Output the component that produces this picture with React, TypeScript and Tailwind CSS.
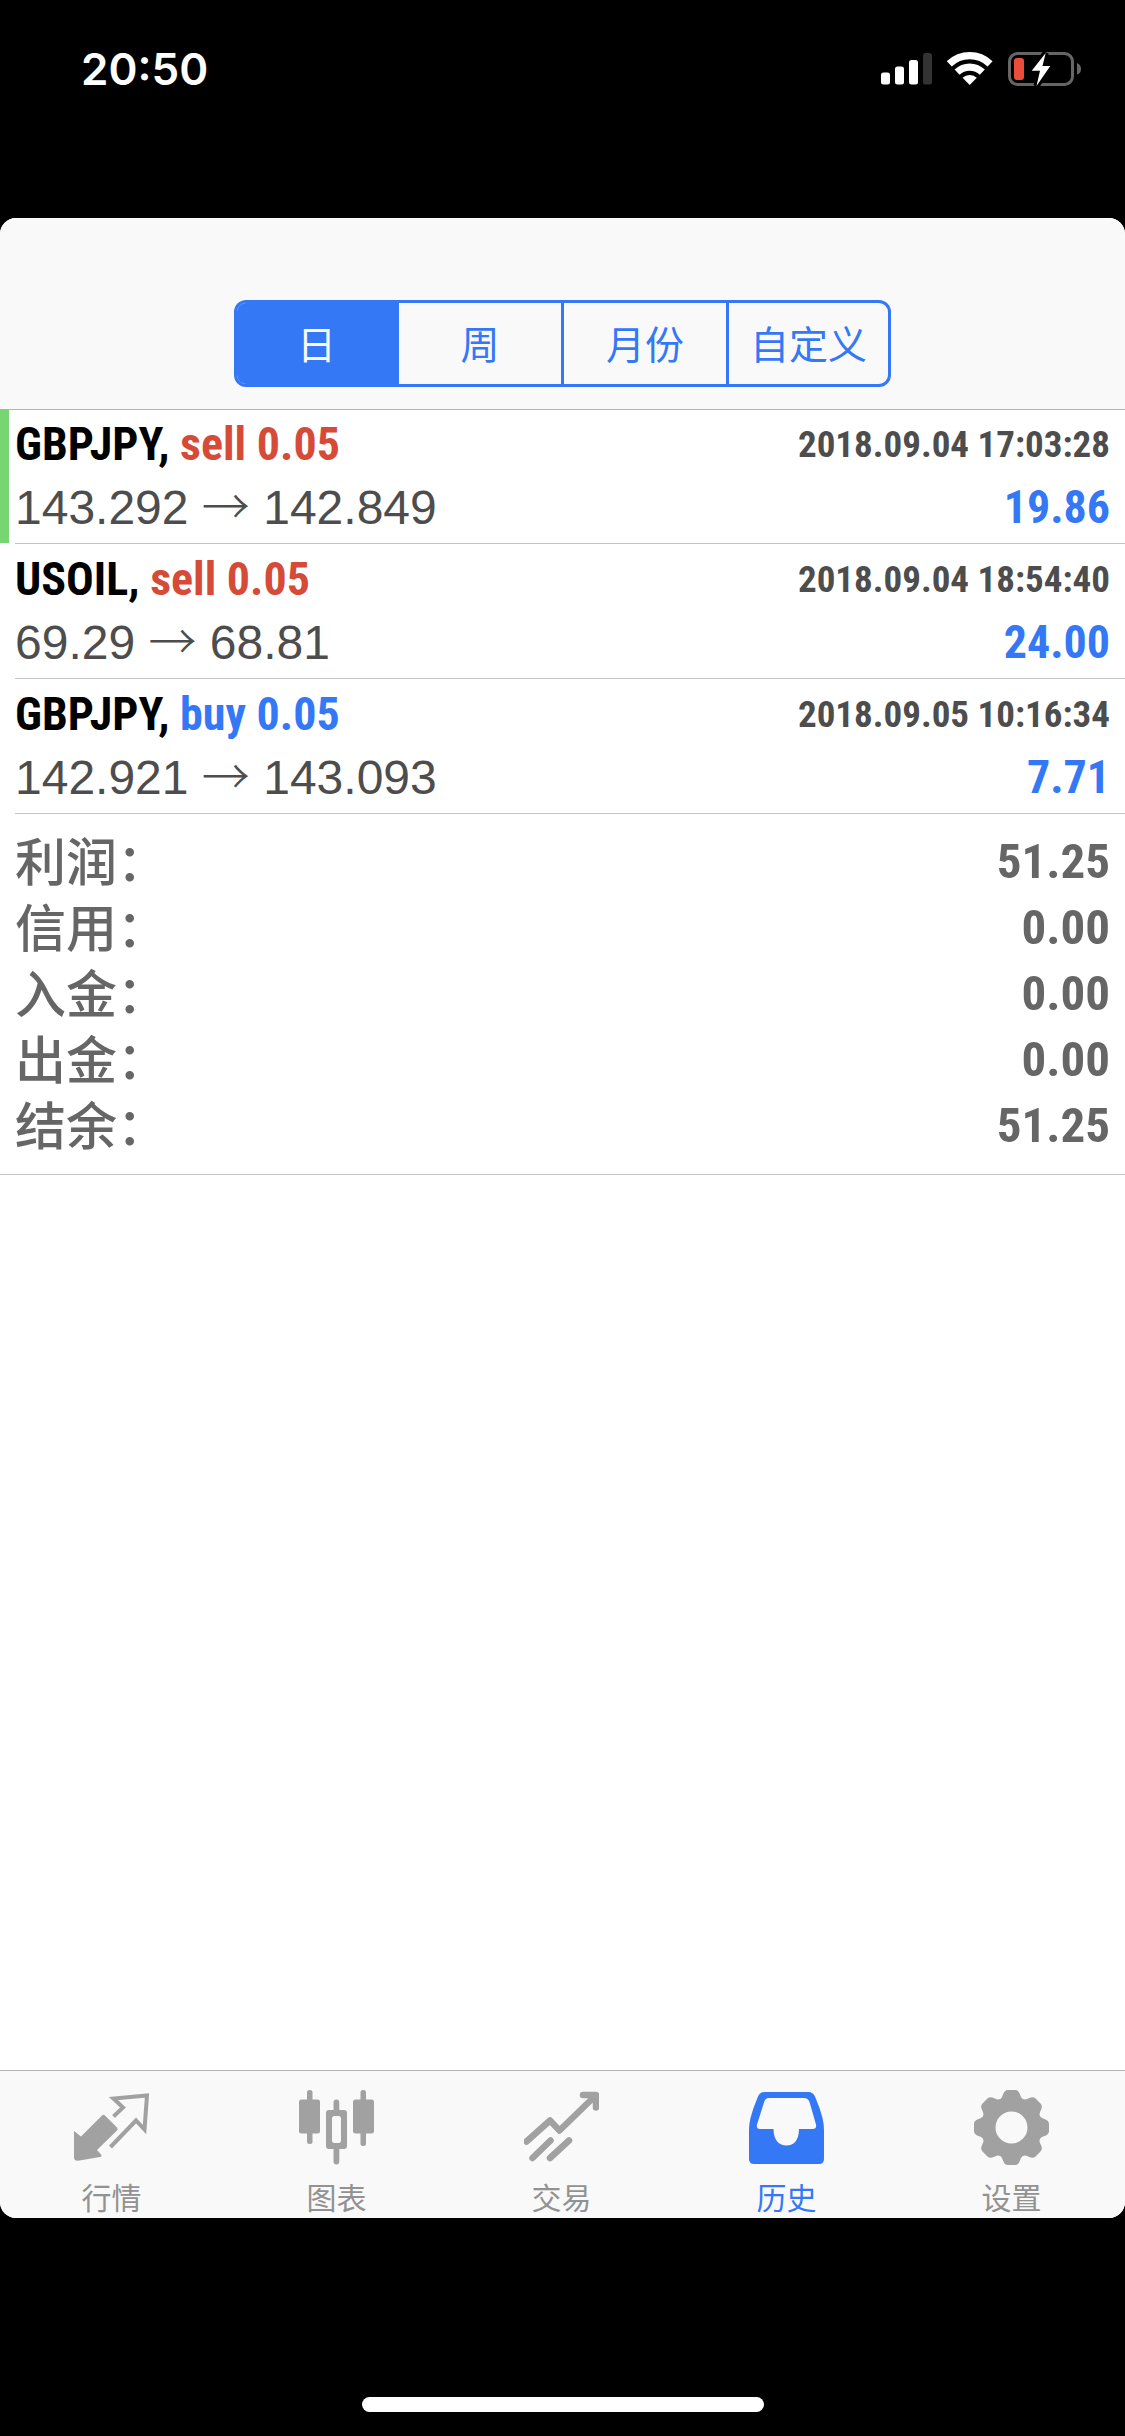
import { useState, type ReactNode } from 'react';

type Deal = {
  symbol: string;
  side: 'buy' | 'sell';
  volume: string;
  open: string;
  close: string;
  time: string;
  profit: string;
  marked?: boolean;
};

const deals: Deal[] = [
  { symbol: 'GBPJPY', side: 'sell', volume: '0.05', open: '143.292', close: '142.849', time: '2018.09.04 17:03:28', profit: '19.86', marked: true },
  { symbol: 'USOIL', side: 'sell', volume: '0.05', open: '69.29', close: '68.81', time: '2018.09.04 18:54:40', profit: '24.00' },
  { symbol: 'GBPJPY', side: 'buy', volume: '0.05', open: '142.921', close: '143.093', time: '2018.09.05 10:16:34', profit: '7.71' },
];

const summary = [
  ['利润', '51.25'],
  ['信用', '0.00'],
  ['入金', '0.00'],
  ['出金', '0.00'],
  ['结余', '51.25'],
];

const periods = ['日', '周', '月份', '自定义'];

function TabIcon({ children }: { children: ReactNode }) {
  return (
    <svg viewBox="0 0 75 75" className="size-[75px]" fill="currentColor" aria-hidden="true">
      {children}
    </svg>
  );
}

const QuotesIcon = () => (
  <TabIcon>
    <path d="M28 25.5Q29.500 24 31 25.500L43 37.500Q44.300 39 43 40.500L23 60L27 64.500Q28.500 66.500 26 67L4 70.700Q0 71 0 67V41L7 46.500Z" />
    <path d="M39.500 26.500L49 17.500L39.500 8.500L73 5.500L70.500 39.500L62 30.500L36.500 57" fill="none" stroke="currentColor" strokeWidth="4" />
  </TabIcon>
);

const ChartIcon = () => (
  <TabIcon>
    <rect x="8" y="0" width="5.500" height="54" rx="2.500" />
    <rect x="0" y="9.500" width="21" height="34" rx="2.500" />
    <rect x="61.500" y="0" width="5.500" height="56" rx="2.500" />
    <rect x="54" y="9.500" width="21" height="34" rx="2.500" />
    <path d="M34.500 20V12.500a2.900 2.900 0 0 1 5.800 0V20H45a3 3 0 0 1 3 3V56a3 3 0 0 1-3 3H40.300V71.500a2.900 2.900 0 0 1-5.800 0V59H30a3 3 0 0 1-3-3V23a3 3 0 0 1 3-3ZM35.500 26a2.500 2.500 0 0 0-2.500 2.500V50.500a2.500 2.500 0 0 0 2.500 2.500H39.500a2.500 2.500 0 0 0 2.500-2.500V28.500a2.500 2.500 0 0 0-2.500-2.500Z" fillRule="evenodd" />
  </TabIcon>
);

const TradeIcon = () => (
  <TabIcon>
    <g fill="none" stroke="currentColor" strokeWidth="6.500" strokeLinecap="round" strokeLinejoin="round">
      <path d="M2.500 51.500L26 30.500L35.500 40.500L70 7" />
      <path d="M59 5H72V17.500" />
      <path d="M8.500 68L26.500 50.500M26 68L45 50.500" />
    </g>
    <path d="M62 3H75V14Z" />
  </TabIcon>
);

const HistoryIcon = () => (
  <TabIcon>
    <path
      fillRule="evenodd"
      d="M15.500 2H59.500Q64 2 66 6.500Q71 18 73.500 28Q75 34 75 40V69Q75 74 70 74H5Q0 74 0 69V40Q0 34 1.500 28Q4 18 9 6.500Q11 2 15.500 2ZM20 8Q16.700 8 15.500 11L8 34.500Q7 39 11 39H24.500C24.500 50 30 55.500 37.500 55.500C45 55.500 50 50 50 39H63.500Q68 39 67 34.500L60.500 12Q59 8 55 8Z"
    />
  </TabIcon>
);

const SettingsIcon = () => (
  <TabIcon>
    <circle cx="37.500" cy="37.500" r="23" fill="none" stroke="currentColor" strokeWidth="14" />
    {[0, 45, 90, 135, 180, 225, 270, 315].map((angle) => (
      <path
        key={angle}
        transform={`rotate(${angle} 37.500 37.500)`}
        d="M23.500 16L25.300 9.500Q27.500 9 29 4.500Q30.500 0 34 0H41Q44.500 0 46 4.500Q47.500 9 49.700 9.500L51.500 16Z"
      />
    ))}
  </TabIcon>
);

const tabs = [
  { label: '行情', Icon: QuotesIcon },
  { label: '图表', Icon: ChartIcon },
  { label: '交易', Icon: TradeIcon },
  { label: '历史', Icon: HistoryIcon },
  { label: '设置', Icon: SettingsIcon },
];

function StatusBar() {
  return (
    <header className="flex h-[218px] items-start justify-between pt-[42px] pr-[44px] pl-[81px] text-white">
      <time className="font-['Inter',sans-serif] text-[44px] leading-[54px] font-semibold">20:50</time>
      <div className="flex gap-[15px] pt-[10px]">
        <svg width="51" height="33" viewBox="0 0 51 33" fill="#fff" aria-hidden="true">
          <rect x="0" y="20.500" width="9" height="12" rx="2.500" />
          <rect x="14" y="14.500" width="9" height="18" rx="2.500" />
          <rect x="28" y="8" width="9" height="24.500" rx="2.500" />
          <rect x="42" y="1" width="9" height="31.500" rx="2.500" fill="#333" />
        </svg>
        <svg width="46" height="34" viewBox="0 0 46 34" fill="none" stroke="#fff" strokeWidth="7.200" aria-hidden="true">
          <path d="M2.300 11.900A29.300 29.300 0 0 1 43.100 11.900" />
          <path d="M10.100 20.100A18.200 18.200 0 0 1 35.300 20.100" />
          <path d="M15.600 25.800A10.300 10.300 0 0 1 29.800 25.800L22.700 33Z" fill="#fff" stroke="none" />
        </svg>
        <svg width="73" height="34" viewBox="0 0 73 34" aria-hidden="true">
          <rect x="1.500" y="1.500" width="63" height="31" rx="8" fill="none" stroke="#666" strokeWidth="3" />
          <rect x="6" y="6" width="10" height="22" rx="3" fill="#eb4d3d" />
          <path d="M69 11Q73 12.500 73 17T69 22.500Z" fill="#666" />
          <path d="M37.700 1L23.700 18.700H32L28.500 34L42.300 14H34.500Z" fill="#fff" stroke="#000" strokeWidth="6" paintOrder="stroke" />
        </svg>
      </div>
    </header>
  );
}

function DealRow({ deal }: { deal: Deal }) {
  return (
    <li className="flex">
      <span className={deal.marked ? 'mb-px w-[9px] bg-[#77d672]' : 'w-[9px]'} />
      <div className="ml-[6px] flex-1 border-b border-[#c4c4c6] pt-[4px] pr-[15px] pb-[4px]">
        <div className="flex items-center justify-between leading-[63px] font-bold">
          <p className="text-[46px] text-black">
            {deal.symbol}, <span className={deal.side === 'buy' ? 'text-[#3478f6]' : 'text-[#d64b37]'}>{deal.side} {deal.volume}</span>
          </p>
          <time className="text-[37px] text-[#4d4d4d]">{deal.time}</time>
        </div>
        <div className="flex items-center justify-between leading-[63px]">
          <p className="font-['Liberation_Sans',sans-serif] text-[48px] text-[#4d4d4d]">
            {deal.open} <span className="font-['Noto_Sans_CJK_SC',sans-serif] leading-none font-light">→</span> {deal.close}
          </p>
          <p className="text-[46px] font-bold text-[#3478f6]">{deal.profit}</p>
        </div>
      </div>
    </li>
  );
}

export default function App() {
  const [period, setPeriod] = useState('日');
  const [tab, setTab] = useState('历史');

  return (
    <div className="flex min-h-screen flex-col bg-black font-['Roboto_Condensed','Liberation_Sans','Noto_Sans_CJK_SC',sans-serif]">
      <StatusBar />
      <div className="flex flex-1 flex-col overflow-hidden rounded-2xl bg-white">
        <div className="border-b border-[#b2b2b2] bg-[#f9f9f9] px-4 pt-[82px] pb-[22px]">
          <div className="mx-auto grid h-[87px] max-w-[657px] grid-cols-[162fr_165fr_165fr_159fr] divide-x-[3px] divide-[#3478f6] overflow-hidden rounded-xl border-[3px] border-[#3478f6]">
            {periods.map((name) => (
              <button
                key={name}
                type="button"
                aria-pressed={period === name}
                onClick={() => setPeriod(name)}
                className={
                  period === name
                    ? "bg-[#3478f6] pb-[4px] font-['Noto_Sans_CJK_SC',sans-serif] text-[39px] leading-[60px] text-[#f9f9f9]"
                    : "pb-[4px] font-['Noto_Sans_CJK_SC',sans-serif] text-[39px] leading-[60px] text-[#3478f6]"
                }
              >
                {name}
              </button>
            ))}
          </div>
        </div>

        <main className="-mt-px flex-1">
          <ul>
            {deals.map((deal) => (
              <DealRow key={deal.time} deal={deal} />
            ))}
          </ul>
          <dl className="border-b border-[#c4c4c6] px-[15px] py-[15px] leading-[66px] text-[#666]">
            {summary.map(([label, value]) => (
              <div key={label} className="flex items-start justify-between">
                <dt className="font-['Noto_Sans_CJK_SC',sans-serif] text-[51px] leading-[60px] font-medium" lang="zh-CN">{label}：</dt>
                <dd className="text-[49px] font-bold">{value}</dd>
              </div>
            ))}
          </dl>
        </main>

        <nav className="grid grid-cols-5 border-t border-[#b2b2b2] bg-[#f9f9f9]">
          {tabs.map(({ label, Icon }) => (
            <button
              key={label}
              type="button"
              onClick={() => setTab(label)}
              className={
                tab === label
                  ? 'flex flex-col items-center gap-[9px] pt-[19px] pr-[2px] text-[#3478f6]'
                  : 'flex flex-col items-center gap-[9px] pt-[19px] pr-[2px] text-[#a1a1a1]'
              }
            >
              <Icon />
              <span
                className={
                  tab === label
                    ? "font-['Noto_Sans_CJK_SC',sans-serif] text-[30px] leading-[44px]"
                    : "font-['Noto_Sans_CJK_SC',sans-serif] text-[30px] leading-[44px] text-[#929292]"
                }
              >
                {label}
              </span>
            </button>
          ))}
        </nav>
      </div>
      <footer className="flex h-[218px] items-end justify-center pb-6">
        <div className="h-[15px] w-[402px] rounded-full bg-white" />
      </footer>
    </div>
  );
}
